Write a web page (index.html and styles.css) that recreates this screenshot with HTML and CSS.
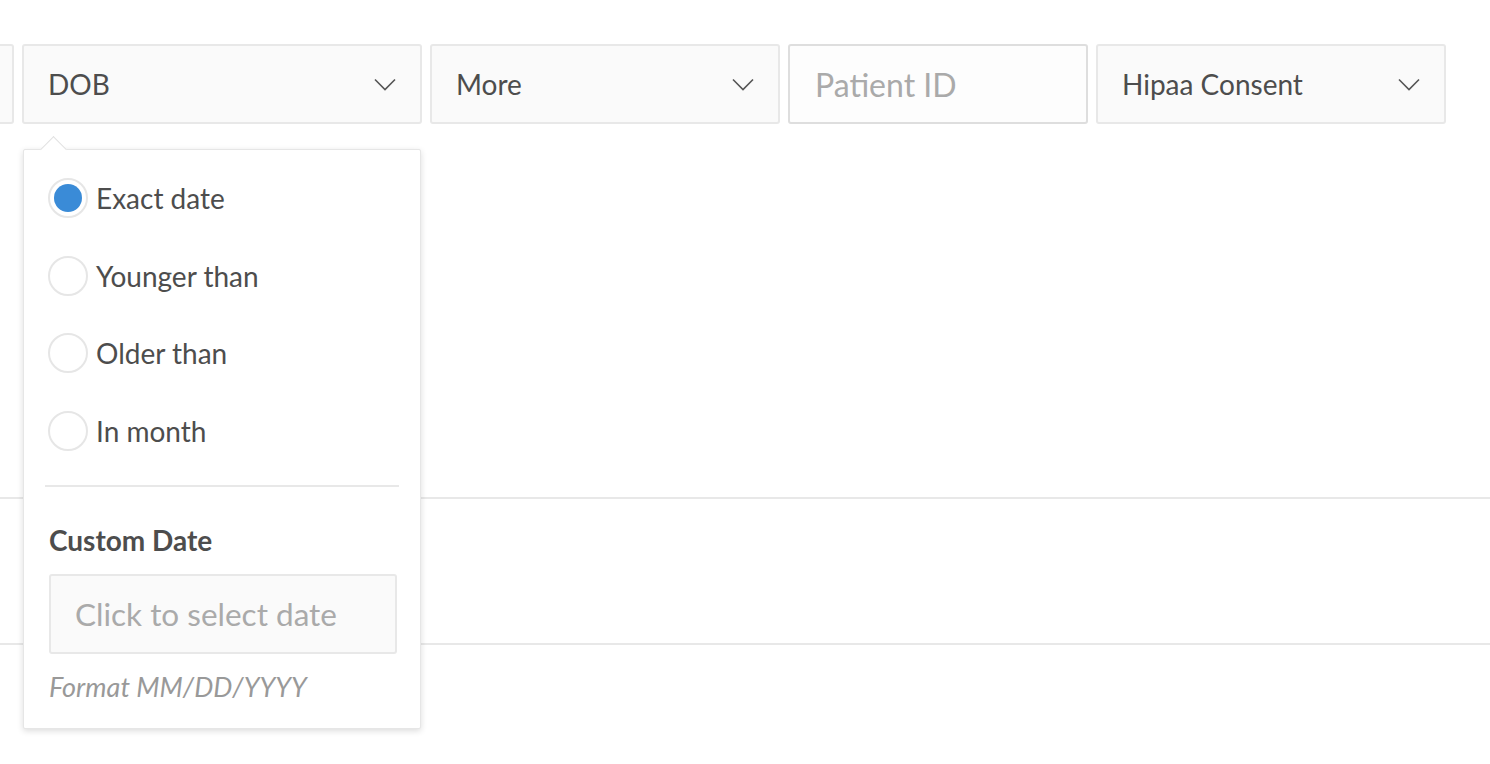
FILE: index.html
```html
<!DOCTYPE html>
<html>
<head>
<meta charset="utf-8">
<link rel="stylesheet" href="styles.css">
</head>
<body>
<div class="page">
  <div class="filters">
    <div class="field select partial"></div>
    <div class="dob-wrap">
      <div class="field select">
        <span class="label">DOB</span>
        <svg class="chev" width="22" height="13" viewBox="0 0 22 13"><path d="M1 1.5 L11 11.5 L21 1.5" fill="none" stroke="#555" stroke-width="1.6"/></svg>
      </div>
      <div class="popup">
        <div class="tail"></div>
        <div class="options">
          <div class="opt"><span class="radio on"><span class="dot"></span></span><span>Exact date</span></div>
          <div class="opt"><span class="radio"></span><span>Younger than</span></div>
          <div class="opt"><span class="radio"></span><span>Older than</span></div>
          <div class="opt"><span class="radio"></span><span>In month</span></div>
        </div>
        <div class="divider"></div>
        <div class="custom-title">Custom Date</div>
        <div class="date-input">Click to select date</div>
        <div class="hint">Format MM/DD/YYYY</div>
      </div>
    </div>
    <div class="field select w350">
      <span class="label">More</span>
      <svg class="chev" width="22" height="13" viewBox="0 0 22 13"><path d="M1 1.5 L11 11.5 L21 1.5" fill="none" stroke="#555" stroke-width="1.6"/></svg>
    </div>
    <div class="field input w300"><span class="placeholder">Patient ID</span></div>
    <div class="field select w350">
      <span class="label">Hipaa Consent</span>
      <svg class="chev" width="22" height="13" viewBox="0 0 22 13"><path d="M1 1.5 L11 11.5 L21 1.5" fill="none" stroke="#555" stroke-width="1.6"/></svg>
    </div>
  </div>
  <div class="table">
    <div class="row"></div>
    <div class="row"></div>
  </div>
</div>
</body>
</html>
```
FILE: styles.css
```css
* { box-sizing: border-box; }
html, body { margin: 0; padding: 0; background: #fff; }
body {
  font-family: Lato, "Open Sans", sans-serif;
  color: #4d4d4d;
  overflow: hidden;
  width: 1490px;
  height: 764px;
}
.page { padding-top: 44px; }
.filters {
  display: flex;
  gap: 8px;
  margin-left: -286px;
}
.field {
  height: 80px;
  border: 2px solid #e8e8e8;
  border-radius: 3px;
  background: #fafafa;
  display: flex;
  align-items: center;
  justify-content: space-between;
  padding: 0 24px 0 24px;
  font-size: 28px;
  flex: none;
}
.partial { width: 300px; }
.dob-wrap { position: relative; width: 400px; flex: none; }
.dob-wrap .field { width: 400px; }
.w350 { width: 350px; }
.w300 { width: 300px; }
.field.input { background: #fdfdfd; border-color: #dedede; font-size: 32px; padding-left: 25px; }
.placeholder { color: #aaa; }
.chev { display: block; margin-top: 1px; }

.popup {
  position: absolute;
  top: 105px;
  left: 1px;
  width: 398px;
  height: 580px;
  background: #fff;
  border: 1px solid #e6e6e6;
  border-radius: 2px;
  box-shadow: 0 2px 6px rgba(0,0,0,0.14);
  padding: 28px 21px 0 21px;
  z-index: 2;
}
.tail {
  position: absolute;
  top: -10px;
  left: 20px;
  width: 19px;
  height: 19px;
  background: #fff;
  border-left: 1px solid #e2e2e2;
  border-top: 1px solid #e2e2e2;
  transform: rotate(45deg);
}
.options {
  display: flex;
  flex-direction: column;
  gap: 37.5px;
  padding-left: 3px;
}
.opt {
  display: flex;
  align-items: center;
  gap: 8px;
  height: 40px;
  font-size: 28px;
}
.radio {
  width: 40px;
  height: 40px;
  border: 2px solid #e6e6e6;
  border-radius: 50%;
  display: flex;
  align-items: center;
  justify-content: center;
  flex: none;
}
.dot {
  width: 28px;
  height: 28px;
  border-radius: 50%;
  background: #3a8bd7;
}
.divider {
  height: 2px;
  background: #e8e8e8;
  margin-top: 34px;
}
.custom-title {
  font-weight: 700;
  font-size: 28px;
  margin-top: 37px;
  padding-left: 4px;
  line-height: 32px;
}
.date-input {
  margin-top: 18px;
  margin-left: 4px;
  width: 348px;
  height: 80px;
  border: 2px solid #e8e8e8;
  border-radius: 3px;
  background: #fafafa;
  display: flex;
  align-items: center;
  padding-left: 24px;
  font-size: 31.5px;
  color: #aaa;
}
.hint {
  margin-top: 18px;
  padding-left: 4px;
  font-style: italic;
  font-size: 27px;
  color: #999;
  line-height: 30px;
}
.table { margin-top: 373px; }
.row {
  height: 146px;
  border-top: 2px solid #e8e8e8;
}
```
